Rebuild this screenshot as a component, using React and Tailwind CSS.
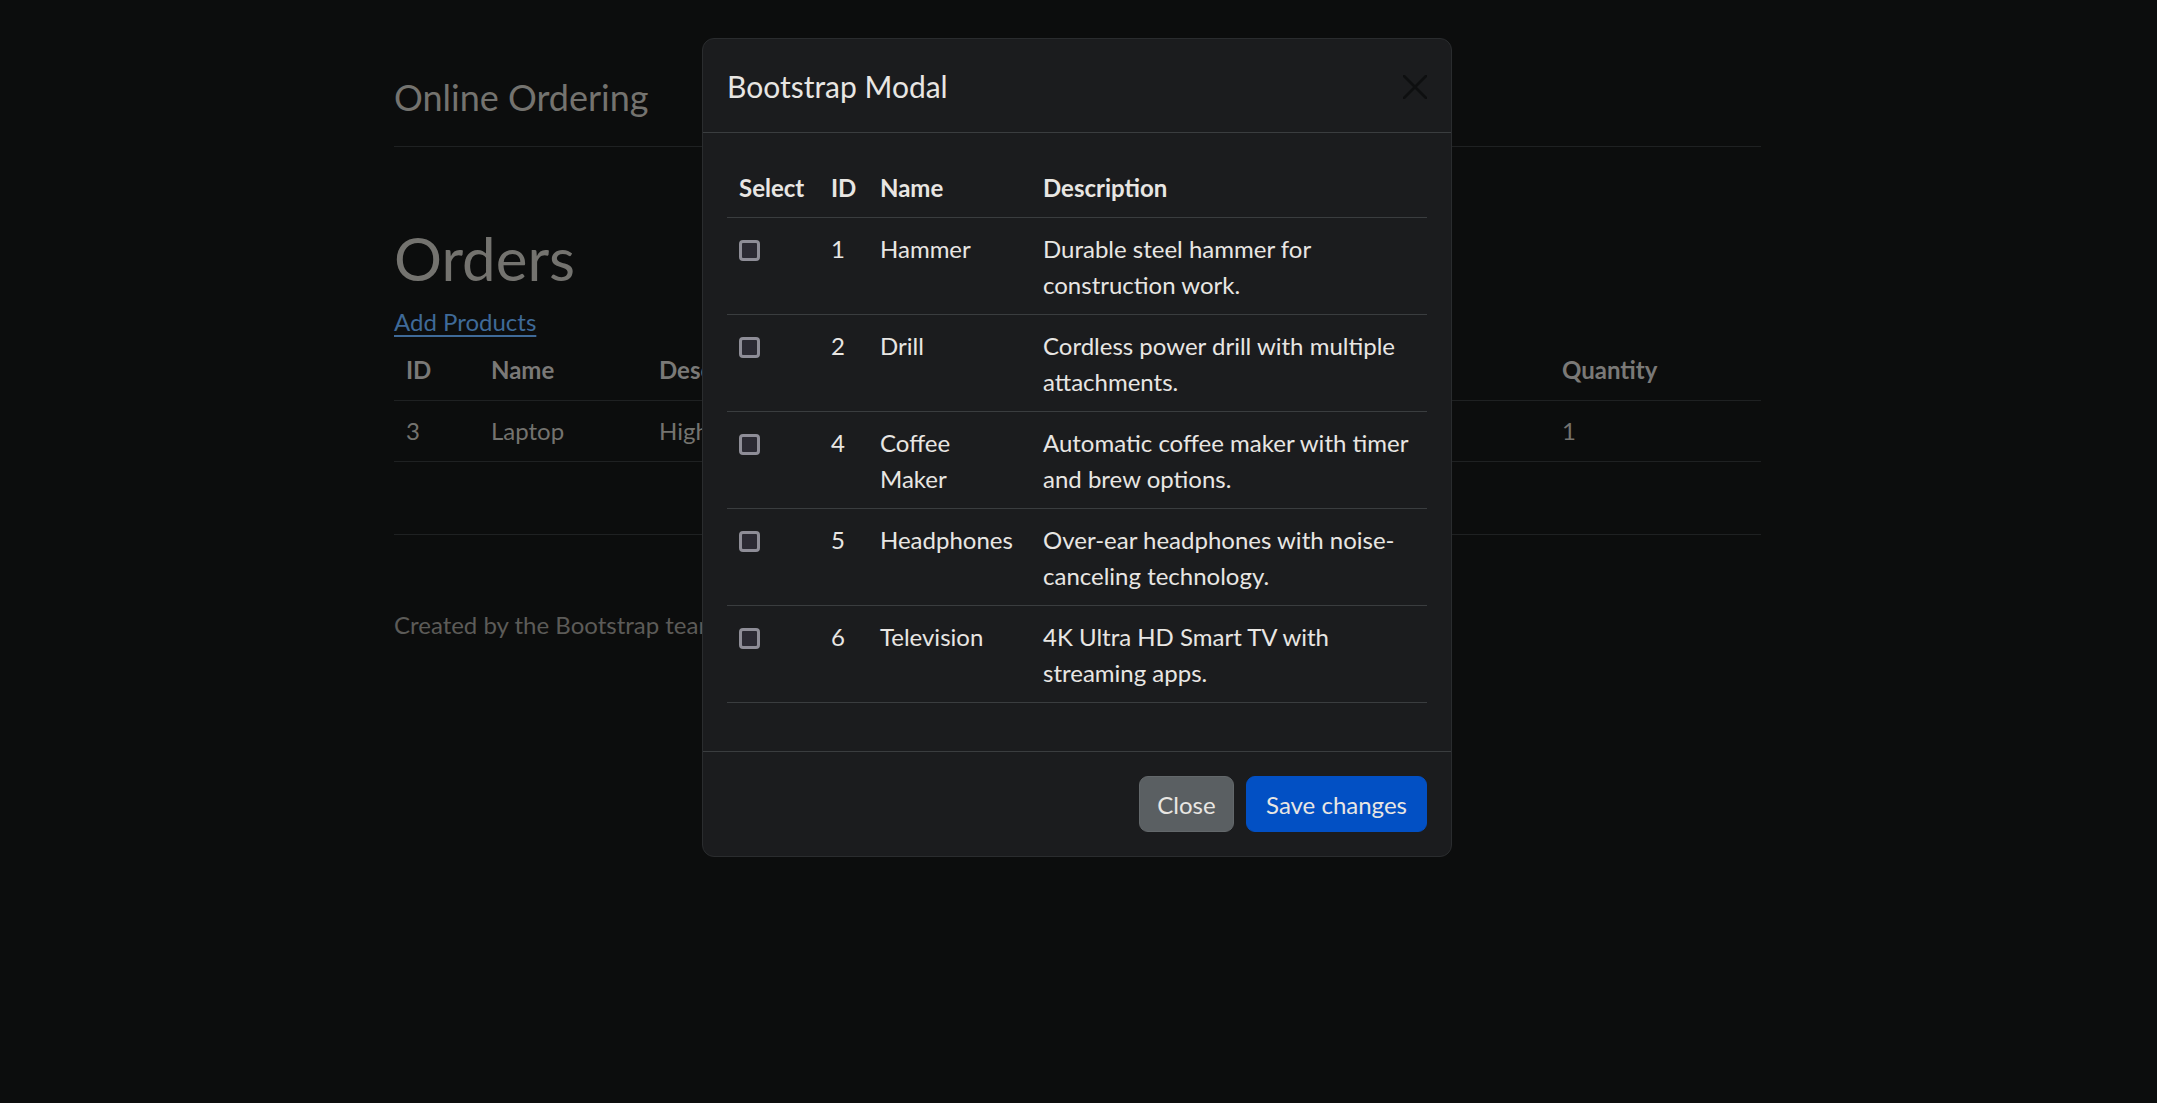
import React from 'react';

const products = [
  { id: 1, name: 'Hammer', description: 'Durable steel hammer for construction work.' },
  { id: 2, name: 'Drill', description: 'Cordless power drill with multiple attachments.' },
  { id: 4, name: 'Coffee Maker', description: 'Automatic coffee maker with timer and brew options.' },
  { id: 5, name: 'Headphones', description: 'Over-ear headphones with noise-canceling technology.' },
  { id: 6, name: 'Television', description: '4K Ultra HD Smart TV with streaming apps.' },
];

const orders = [
  { id: 3, name: 'Laptop', description: 'High-performance laptop for work', price: '$999.99', quantity: 1 },
];

function OrdersPage() {
  return (
    <div className="pr-[2px]">
      <div className="w-[1367px] mx-auto pt-[70px]">
        <header className="pb-[22px] border-b border-[#1f2122]">
          <span className="text-[36px] leading-[54px] text-[#74736f]">Online Ordering</span>
        </header>

        <main className="mt-[75px]">
          <h1 className="text-[60px] leading-[72px] text-[#74736f] mb-[10px]">Orders</h1>
          <a href="#" className="block w-fit text-[24px] leading-[36px] text-[#3f6a98] underline underline-offset-[4px]">
            Add Products
          </a>

          <table className="table-fixed w-full text-[24px] leading-[36px] text-[#74736f]">
            <thead>
              <tr className="border-b border-[#1f2122]">
                <th className="w-[85px] px-3 py-3 text-left font-bold text-[#7a7977]">ID</th>
                <th className="w-[168px] px-3 py-3 text-left font-bold text-[#7a7977]">Name</th>
                <th className="w-[450px] px-3 py-3 text-left font-bold text-[#7a7977]">Description</th>
                <th className="px-3 py-3 text-left font-bold text-[#7a7977]">Price</th>
                <th className="w-[211px] px-3 py-3 text-left font-bold text-[#7a7977]">Quantity</th>
              </tr>
            </thead>
            <tbody>
              {orders.map((order) => (
                <tr key={order.id} className="border-b border-[#1f2122]">
                  <td className="px-3 py-3">{order.id}</td>
                  <td className="px-3 py-3">{order.name}</td>
                  <td className="px-3 py-3 whitespace-nowrap overflow-hidden">{order.description}</td>
                  <td className="px-3 py-3">{order.price}</td>
                  <td className="px-3 py-3">{order.quantity}</td>
                </tr>
              ))}
            </tbody>
          </table>
        </main>

        <footer className="mt-[72px] pt-[72px] border-t border-[#1f2122] text-[24px] leading-[36px] text-[#5c5b58]">
          Created by the Bootstrap team · © 2024
        </footer>
      </div>
    </div>
  );
}

function ProductModal() {
  return (
    <div className="absolute inset-0 flex justify-center pr-[3px]">
      <div className="mt-[38px] w-[750px] h-fit bg-[#1b1c1e] border border-[#2a2c2e] rounded-[12px] text-[#e8e6e3]">
        <div className="flex items-center justify-between px-6 pt-[25px] pb-[23px] border-b border-[#3a3d3f]">
          <h5 className="text-[30px] leading-[45px]">Bootstrap Modal</h5>
          <button className="w-6 h-6 flex items-center justify-center" aria-label="Close">
            <svg width="24" height="24" viewBox="0 0 24 24" fill="none">
              <path d="M1 1L23 23M23 1L1 23" stroke="#0e0f10" strokeWidth="2.6" strokeLinecap="round" />
            </svg>
          </button>
        </div>

        <div className="p-6">
          <table className="table-fixed w-full mb-6 text-[24px] leading-[36px]">
            <thead>
              <tr className="border-b border-[#3a3d3f]">
                <th className="w-[92px] px-3 pt-[13px] pb-[11px] text-left font-bold">Select</th>
                <th className="w-[49px] px-3 pt-[13px] pb-[11px] text-left font-bold">ID</th>
                <th className="w-[163px] px-3 pt-[13px] pb-[11px] text-left font-bold">Name</th>
                <th className="px-3 pt-[13px] pb-[11px] text-left font-bold">Description</th>
              </tr>
            </thead>
            <tbody>
              {products.map((product) => (
                <tr key={product.id} className="border-b border-[#3a3d3f] align-top">
                  <td className="px-3 py-3">
                    <div className="mt-[10px] w-[21px] h-[21px] border-[3px] border-[#8e8d97] bg-[#2b2a33] rounded-[4px]" />
                  </td>
                  <td className="px-3 pt-[13px] pb-[11px]">{product.id}</td>
                  <td className="px-3 pt-[13px] pb-[11px]">{product.name}</td>
                  <td className="px-3 pt-[13px] pb-[11px]">{product.description}</td>
                </tr>
              ))}
            </tbody>
          </table>
        </div>

        <div className="flex items-center justify-end gap-3 pr-6 py-6 border-t border-[#3a3d3f]">
          <button className="w-[95px] h-[56px] pt-[2px] rounded-[9px] bg-[#5a5f62] border border-[#63686b] text-[24px] text-[#e8e6e3]">
            Close
          </button>
          <button className="w-[181px] h-[56px] pt-[2px] rounded-[9px] bg-[#0250c4] border border-[#0250c4] text-[24px] text-[#e8e6e3]">
            Save changes
          </button>
        </div>
      </div>
    </div>
  );
}

export default function App() {
  return (
    <div className="relative min-h-screen bg-[#0c0d0d] font-['Lato','Open_Sans',sans-serif]">
      <OrdersPage />
      <ProductModal />
    </div>
  );
}
